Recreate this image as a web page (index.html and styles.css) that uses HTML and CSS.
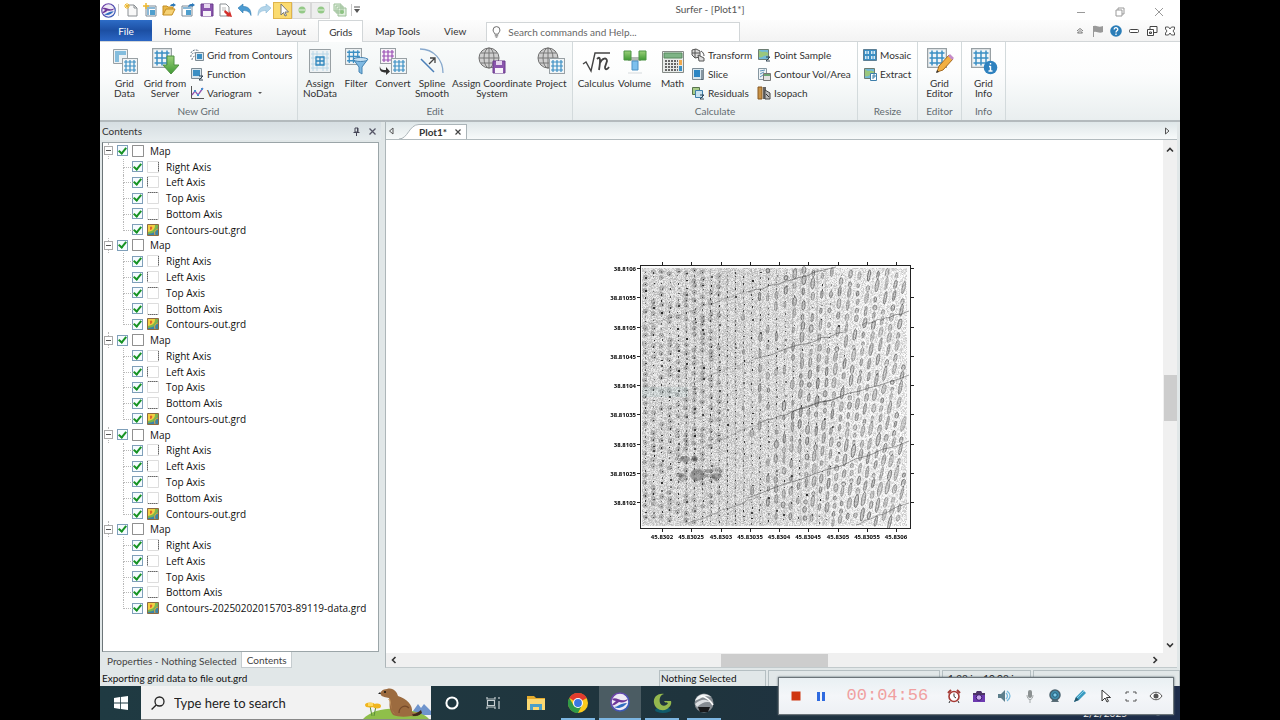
FILE: index.html
```html
<!DOCTYPE html>
<html lang="en">
<head>
<meta charset="utf-8">
<title>Surfer - [Plot1*]</title>
<link rel="stylesheet" href="styles.css">
</head>
<body>
<svg class="defs" aria-hidden="true">
  <defs>
    <linearGradient id="green" x1="0" y1="0" x2="0" y2="1"><stop offset="0" stop-color="#9bd07a"/><stop offset="1" stop-color="#3f9a34"/></linearGradient>
    <linearGradient id="brand" x1="0" y1="0" x2="1" y2="1"><stop offset="0" stop-color="#7b3fa8"/><stop offset="1" stop-color="#2c5fb8"/></linearGradient>
    <symbol id="grid" viewBox="0 0 16 16"><rect x=".5" y=".5" width="15" height="15" fill="#f1f5f7" stroke="#98a0a4"/><path d="M4 2v12M8 2v12M12 2v12M2 4h12M2 8h12M2 12h12" stroke="#3b8fc4" stroke-width="1.2"/></symbol>
    <symbol id="grid-purple" viewBox="0 0 16 16"><rect x=".5" y=".5" width="15" height="15" fill="#f7f2f8" stroke="#98a0a4"/><path d="M4 2v12M8 2v12M12 2v12M2 4h12M2 8h12M2 12h12" stroke="#9a4fb5" stroke-width="1.2"/></symbol>
    <symbol id="globe" viewBox="0 0 22 22"><circle cx="11" cy="11" r="10" fill="#cfcfcf" stroke="#6f6f6f"/><ellipse cx="11" cy="11" rx="5" ry="10" fill="none" stroke="#777"/><path d="M11 1v20M1 11h20M3 6h16M3 16h16" stroke="#777"/></symbol>
    <symbol id="brand-mark" viewBox="0 0 20 20"><circle cx="10" cy="10" r="9" fill="#eee9f5" stroke="url(#brand)" stroke-width="1.6"/><path d="M2 7c5-3 8 4 16 0-1 3-6 4-9 3-3 2-5 4-7 3 1-2 3-3 4-4-2 0-3-1-4-2z" fill="#6e3699"/><path d="M4 15c4 0 6-4 13-4-2 3-8 7-13 4z" fill="#2f6cc0"/></symbol>
    <symbol id="disk" viewBox="0 0 14 14"><path d="M1 1h12v12H1z" fill="#8a55ad" stroke="#6b3d8c"/><path d="M4 1h6v4H4z" fill="#e6d6ef"/><path d="M3 8h8v5H3z" fill="#f8f4fa"/></symbol>
  </defs>
</svg>
<div class="app">
  <header class="titlebar">
    <div class="quick">
      <svg class="qi"><use href="#brand-mark"/></svg>
      <i class="qsep"></i>
      <button class="q" aria-label="New plot"><svg viewBox="0 0 14 14"><path d="M4 2h6l3 3v8H4z" fill="#f8f8f8" stroke="#8a8f93"/><path d="M10 2v3h3" fill="none" stroke="#8a8f93"/><path d="M3 0v6M0 3h6M1 1l4 4M5 1L1 5" stroke="#f0b92d"/></svg></button>
      <button class="q" aria-label="New worksheet"><svg viewBox="0 0 14 14"><path d="M3 3h10v10H3z" fill="#fff" stroke="#7c8b98"/><path d="M4 4h8v2H4zM4 6h2v6H4z" fill="#8bb9d8"/><path d="M7 7h5v5H7z" fill="#4f9fce"/><path d="M3 0v6M0 3h6" stroke="#f0b92d" stroke-width="1.5"/></svg></button>
      <button class="q" aria-label="Open"><svg viewBox="0 0 14 14"><path d="M1 12V3h4l1 1h5v2" fill="#e9b94a" stroke="#c58e22"/><path d="M1 12l3-6h9l-3 6z" fill="#f6d276" stroke="#c58e22"/><path d="M8 3c1-2 2-2 3-2V0l3 2-3 2V3z" fill="#2d79b9"/></svg></button>
      <button class="q" aria-label="Import"><svg viewBox="0 0 14 14"><path d="M1 3h10v10H1z" fill="#fff" stroke="#7c8b98"/><path d="M2 4h8v2H2z" fill="#8bb9d8"/><path d="M5 7h5v5H5z" fill="#4f9fce"/><path d="M7 4c1-3 2-3 4-3V0l3 2-3 2V3z" fill="#2d79b9"/></svg></button>
      <button class="q" aria-label="Save"><svg><use href="#disk"/></svg></button>
      <button class="q" aria-label="Export"><svg viewBox="0 0 14 14"><path d="M1 1h6l3 3v9H1z" fill="#fff" stroke="#8a8f93"/><path d="M3 5h4M3 7h4" stroke="#bbb"/><path d="M6 7l4 3 1-2 2 6-6-1 1-1-3-3z" fill="#d3302c"/></svg></button>
      <button class="q" aria-label="Undo"><svg viewBox="0 0 14 14"><path d="M0 5l5-4v2.500c5 0 8 2 8 9-1-3-3-5-8-5V10z" fill="#4b9bd2" stroke="#2e78ae" stroke-width=".6"/></svg></button>
      <button class="q" aria-label="Redo"><svg viewBox="0 0 14 14"><path d="M14 5L9 1v2.500c-5 0-8 2-8 9 1-3 3-5 8-5V10z" fill="#b3d5ea" stroke="#8ab8d6" stroke-width=".6"/></svg></button>
      <button class="q q-on" aria-label="Select"><svg viewBox="0 0 14 14"><path d="M5 1v11l2.500-2.500L9 13l1.500-.6L9 9h3.500z" fill="#fff" stroke="#777"/></svg></button>
      <button class="q q-box" aria-label="Previous"><svg viewBox="0 0 14 14"><circle cx="7" cy="7" r="3.500" fill="#94c987"/><path d="M4 7h6" stroke="#e8f6e4"/></svg></button>
      <button class="q q-box" aria-label="Next"><svg viewBox="0 0 14 14"><circle cx="7" cy="7" r="3.500" fill="#94c987"/><path d="M4 7h6" stroke="#e8f6e4"/></svg></button>
      <button class="q" aria-label="Duplicate"><svg viewBox="0 0 14 14"><path d="M1 1h7v7H1zM3 3h7v7H3zM5 5h8v8H5z" fill="#e2f0df" stroke="#9bbf97"/><circle cx="9" cy="9" r="2" fill="#8cc381"/></svg></button>
      <i class="qsep"></i>
      <button class="more" aria-label="Customize"><svg viewBox="0 0 6 8"><path d="M0 1h6" stroke="#555"/><path d="M0 3h6L3 7z" fill="#555"/></svg></button>
    </div>
    <h1 class="title">Surfer - [Plot1*]</h1>
    <div class="win">
      <button aria-label="Minimize"><svg viewBox="0 0 10 10"><path d="M1 5.500h8" stroke="#999"/></svg></button>
      <button aria-label="Restore"><svg viewBox="0 0 10 10"><path d="M1 3h6v6H1zM3 3V1h6v6H7" fill="none" stroke="#999"/></svg></button>
      <button aria-label="Close"><svg viewBox="0 0 10 10"><path d="M1 1l8 8M9 1L1 9" stroke="#999"/></svg></button>
    </div>
  </header>

  <nav class="tabs">
    <button class="tab file">File</button>
    <button class="tab">Home</button>
    <button class="tab">Features</button>
    <button class="tab">Layout</button>
    <button class="tab current">Grids</button>
    <button class="tab">Map Tools</button>
    <button class="tab">View</button>
    <label class="find">
      <svg viewBox="0 0 10 14"><path d="M3 9.500C3 8 1 7 1 4.700a4 4 0 0 1 8 0C9 7 7 8 7 9.500zM3 11.500h4M4 13h2" fill="none" stroke="#555"/></svg>
      <input type="text" placeholder="Search commands and Help..." aria-label="Search commands and Help">
    </label>
    <div class="tools">
      <button aria-label="Collapse ribbon"><svg viewBox="0 0 12 12"><path d="M3 6l3-2.500L9 6M3.500 8h5L6 5.500z" fill="none" stroke="#555" stroke-width=".8"/></svg></button>
      <button aria-label="Flag"><svg viewBox="0 0 12 12"><path d="M1.500 1v11" stroke="#999"/><path d="M2 1c3-1 4 2 9 0v6C7 9 5 6 2 7z" fill="#999"/></svg></button>
      <button aria-label="Help"><svg viewBox="0 0 12 12"><circle cx="6" cy="6" r="5.800" fill="#2a7db8"/><path d="M4.200 4.600C4.200 2 7.900 2.200 7.800 4.400 7.700 5.800 6 5.700 6 7.400M6 8.600V10" fill="none" stroke="#fff" stroke-width="1.300"/></svg></button>
      <button aria-label="Minimize plot"><svg viewBox="0 0 12 12"><rect x="1.500" y="4.500" width="9" height="3" rx="1" fill="#fff" stroke="#444"/></svg></button>
      <button aria-label="Restore plot"><svg viewBox="0 0 12 12"><path d="M4 1.500h7v6H4z" fill="#fff" stroke="#444"/><path d="M1.500 4.500h6v6h-6z" fill="#fff" stroke="#444"/><path d="M3.500 7h2v1.500h-2z" fill="none" stroke="#444"/></svg></button>
      <button aria-label="Close plot"><svg viewBox="0 0 12 12"><path d="M1.500 2h3L6 4l1.500-2h3v2L9 6l1.500 2v2h-3L6 8l-1.500 2h-3V8L3 6 1.500 4z" fill="#fff" stroke="#444" stroke-width=".9"/></svg></button>
    </div>
  </nav>

  <section class="ribbon">
    <div class="group">
      <div class="cmds new-grid">
        <button class="big"><svg viewBox="0 0 28 28"><path d="M2.500 2.500h14v14h-14z" fill="#eef2f4" stroke="#98a0a4"/><path d="M4 4h11v4H8v7H4z" fill="#84bddd"/><use href="#grid" x="11" y="11" width="16" height="16"/></svg>Grid<br>Data</button>
        <button class="big"><svg viewBox="0 0 28 28"><use href="#grid" x="1" y="1" width="20" height="20"/><path d="M16 9h7v9h5l-8 9-8-9h4z" fill="url(#green)" stroke="#4f9044"/></svg>Grid from<br>Server</button>
        <div class="smalls">
          <button class="small"><svg viewBox="0 0 14 14"><path d="M1 5c1-3 5-4 8-2M1 9c-1-2 2-5 6-4M2 12c0-2 1-4 4-4" fill="none" stroke="#678" stroke-dasharray="2 1"/><path d="M5.500 4.500h8v8h-8z" fill="#d8e6ee" stroke="#7d8b94"/><path d="M7 6h5v5H7z" fill="#3b8fc4"/></svg>Grid from Contours</button>
          <button class="small"><svg viewBox="0 0 14 14"><path d="M1.500 1.500h10v10h-10z" fill="#d8e6ee" stroke="#7d8b94"/><path d="M3 3h7v6H3z" fill="#3b8fc4"/><path d="M9 9h4l-4 4h4" fill="none" stroke="#345"/></svg>Function</button>
          <button class="small"><svg viewBox="0 0 14 14"><path d="M1.500 0v12.500H14" fill="none" stroke="#555"/><path d="M2 9l3-4 3 4 5-7" fill="none" stroke="#8f52ad" stroke-width="1.300"/><path d="M4 4h2v2H4zM7 8h2v2H7zM11 2h2v2h-2z" fill="#458fd0"/></svg>Variogram<span class="drop"></span></button>
        </div>
      </div>
      <h2>New Grid</h2>
    </div>
    <div class="group tinted">
      <div class="cmds edit">
        <button class="big"><svg viewBox="0 0 28 28"><path d="M3.500 2.500h21v23h-21z" fill="#eef2f4" stroke="#98a0a4"/><path d="M7 4v20M11 4v20M17 4v20M21 4v20M5 7h18M5 11h18M5 17h18M5 21h18" stroke="#b8d6e6"/><path d="M10 10h8v8h-8zM14 10v8M10 14h8" fill="none" stroke="#2f86bd" stroke-width="1.300"/></svg>Assign<br>NoData</button>
        <button class="big"><svg viewBox="0 0 28 28"><use href="#grid" x="3" y="1" width="17" height="17"/><path d="M11 12h15l-6 8v7l-3-2v-5z" fill="#7fb9e2" stroke="#4583b2"/><ellipse cx="18.500" cy="12.500" rx="7" ry="2" fill="#c5e0f2" stroke="#4583b2"/></svg>Filter</button>
        <button class="big"><svg viewBox="0 0 28 28"><use href="#grid-purple" x="1" y="1" width="16" height="16"/><use href="#grid" x="12" y="11" width="16" height="16"/><path d="M1 19c0 4 3 4 6 4v-3l4 4.500L7 28v-2.500c-5 0-7-2-6-6.500z" fill="#333"/></svg>Convert</button>
        <button class="big"><svg viewBox="0 0 28 28"><path d="M2 2c14 0 23 11 23 24" fill="none" stroke="#88a9cd" stroke-width="1.300"/><path d="M3 12l13 13" stroke="#4a7fb8" stroke-width="1.500"/><path d="M11 17l6-6M12 11h5v5" fill="none" stroke="#444" stroke-width="1.300"/></svg>Spline<br>Smooth</button>
        <button class="big"><svg viewBox="0 0 28 28"><use href="#globe" x="0" y="0" width="22" height="22"/><use href="#disk" x="14" y="13" width="14" height="14"/></svg>Assign Coordinate<br>System</button>
        <button class="big"><svg viewBox="0 0 28 28"><use href="#globe" x="0" y="0" width="22" height="22"/><use href="#grid" x="12" y="11" width="16" height="16"/></svg>Project</button>
      </div>
      <h2>Edit</h2>
    </div>
    <div class="group">
      <div class="cmds calc">
        <button class="big"><svg viewBox="0 0 28 28"><path d="M1 17l3-2 5 9 4-18h15" fill="none" stroke="#444" stroke-width="1.400"/><path d="M15 12c3-3 4-1 2 11M18 16c2-5 7-6 7-2l-2 6c0 3 2 3 4 0" fill="none" stroke="#444" stroke-width="1.800"/></svg>Calculus</button>
        <button class="big"><svg viewBox="0 0 28 28"><path d="M7 10h13v4H7z" fill="#b4b9b5"/><path d="M3 4h7v9H3zM18 4h7v9h-7z" fill="url(#green)" stroke="#4c9544"/><path d="M11 14h6v9h-6z" fill="#7cc0ee" stroke="#4c93c5"/><path d="M7 26h14" stroke="#d5dadd"/></svg>Volume</button>
        <button class="big"><svg viewBox="0 0 28 28"><path d="M3.500 4.500h21v21h-21z" fill="#e8ebe9" stroke="#858b87"/><path d="M5 6h18v5H5z" fill="#7eb486" stroke="#568a5f"/><path d="M6 14h13M6 17h13M6 20h13M6 23h13" stroke="#666" stroke-width="2" stroke-dasharray="2 1"/><path d="M20 13h3v5h-3z" fill="#f0a94d"/><path d="M20 19h3v5h-3z" fill="#3b8fc4"/></svg>Math</button>
        <div class="smalls">
          <button class="small"><svg viewBox="0 0 14 14"><path d="M1 2l4-1 4 2v6l-5 1-3-3zM1 5h8M4 1v9" fill="#ddd" stroke="#555"/><path d="M7 7l6 3v3H8zM10 3c2 1 3 3 3 5" fill="#ddd" stroke="#555"/></svg>Transform</button>
          <button class="small"><svg viewBox="0 0 14 14"><path d="M1.500 1.500h11v11h-11z" fill="#d8e6ee" stroke="#7d8b94"/><path d="M3 3h6v7H3z" fill="#2c86c4"/><path d="M11 3v10" stroke="#345"/></svg>Slice</button>
          <button class="small"><svg viewBox="0 0 14 14"><path d="M1.500 1.500h7v7h-7z" fill="#a8cc88" stroke="#58744d"/><path d="M4.500 4.500h7v7h-7z" fill="#c8e2ef" stroke="#3d7eaa"/><path d="M9 9h4l-4 4h4" fill="none" stroke="#345"/></svg>Residuals</button>
        </div>
        <div class="smalls">
          <button class="small"><svg viewBox="0 0 14 14"><path d="M1.500 1.500h10v10h-10z" fill="#72b9d7" stroke="#6d7d72"/><path d="M2 2c3 4 5 0 9 3v3c-4-2-6 3-9 1z" fill="#9ac77d"/><path d="M9 9h4l-4 4h4" fill="none" stroke="#345"/></svg>Point Sample</button>
          <button class="small"><svg viewBox="0 0 14 14"><path d="M1.500 1.500h8v11h-8z" fill="#eef3f5" stroke="#8697a1"/><path d="M3 4l5-1M3 7l4-2M3 10l3-2" stroke="#5a93ba"/><path d="M6.500 6.500h7v7h-7z" fill="#e2e2e2" stroke="#777"/><path d="M7 7h6v2H7z" fill="#6aa474"/></svg>Contour Vol/Area</button>
          <button class="small"><svg viewBox="0 0 14 14"><path d="M1 1h4v12H1z" fill="#c79145" stroke="#8a5b22"/><path d="M6 1h3v12H6z" fill="#666"/><path d="M8 4l5 3v6H8z" fill="#bbb" stroke="#444"/><path d="M9 8l3 3" stroke="#333"/></svg>Isopach</button>
        </div>
      </div>
      <h2>Calculate</h2>
    </div>
    <div class="group">
      <div class="cmds resize">
        <div class="smalls">
          <button class="small"><svg viewBox="0 0 14 14"><path d="M.5 1.500h13v11H.5z" fill="#3b8fc4" stroke="#5d7f95"/><path d="M2 3h4v3H2zM8 3h4v3H8zM2 8h4v3H2zM8 8h4v3H8z" fill="#d7eaf5"/><path d="M4 3v8M10 3v8" stroke="#3b8fc4"/></svg>Mosaic</button>
          <button class="small"><svg viewBox="0 0 14 14"><path d="M1.500 1.500h10v10h-10z" fill="#72b9d7" stroke="#6d7d72"/><path d="M2 2c3 4 5 0 9 3v3c-4-2-6 3-9 1z" fill="#9ac77d"/><path d="M7.500 6.500h6v7h-6z" fill="#fff" stroke="#3d7eaa"/><path d="M10 12V8h2v2h-2" fill="none" stroke="#3d7eaa"/></svg>Extract</button>
        </div>
      </div>
      <h2>Resize</h2>
    </div>
    <div class="group">
      <div class="cmds single">
        <button class="big"><svg viewBox="0 0 28 28"><use href="#grid" x="1" y="1" width="20" height="20"/><path d="M11 25l2-6L23 8l4 4-10 11z" fill="#f2b043" stroke="#a66b21"/><path d="M22 9l2-2 4 4-2 2z" fill="#c58bc9"/><path d="M10 26l1-3 2 2z" fill="#333"/></svg>Grid<br>Editor</button>
      </div>
      <h2>Editor</h2>
    </div>
    <div class="group">
      <div class="cmds single">
        <button class="big"><svg viewBox="0 0 28 28"><use href="#grid" x="1" y="1" width="20" height="20"/><circle cx="20.500" cy="20.500" r="6.800" fill="#2f82bf"/><path d="M20.500 19v5M19 19.500h1.500M18.500 24h4M20.500 16v1.600" stroke="#fff" stroke-width="1.400"/></svg>Grid<br>Info</button>
      </div>
      <h2>Info</h2>
    </div>
  </section>

  <main class="work">
    <aside class="side">
      <div class="side-head"><h2>Contents</h2>
        <button aria-label="Auto hide"><svg viewBox="0 0 9 9"><path d="M3 1h3v4H3zM1.500 5.500h6M4.500 5.500V9M5.500 1v4" fill="none" stroke="#445"/></svg></button>
        <button aria-label="Close panel"><svg viewBox="0 0 9 9"><path d="M1.500 1.500l6 6M7.500 1.500l-6 6" stroke="#556" stroke-width="1.300"/></svg></button>
      </div>
      <div class="tree-box"><ul class="tree" id="tree"></ul></div>
      <div class="side-tabs"><button>Properties - Nothing Selected</button><button class="on">Contents</button></div>
    </aside>
    <section class="doc">
      <div class="doc-tabs">
        <button class="arrow" aria-label="Scroll tabs left"><svg viewBox="0 0 8 8"><path d="M6 1v6L2.500 4z" fill="none" stroke="#555"/></svg></button>
        <svg class="slope" viewBox="0 0 20 15"><path d="M0 15C9 15 10 .5 20 .5V15z" fill="#fff"/><path d="M0 15C9 15 10 .5 20 .5" fill="none" stroke="#aab4b8"/></svg>
        <button class="doc-tab">Plot1*<svg viewBox="0 0 8 8"><path d="M1.500 1.500l5 5M6.500 1.500l-5 5" stroke="#444" stroke-width="1.200"/></svg></button>
        <button class="arrow end" aria-label="Scroll tabs right"><svg viewBox="0 0 8 8"><path d="M2.500 1v6L6 4z" fill="none" stroke="#555"/></svg></button>
      </div>
      <div class="view">
        <figure class="plot">
          <canvas id="contours" width="270" height="263"></canvas>
          <svg id="axes" width="340" height="301" viewBox="0 0 340 301"></svg>
        </figure>
        <div class="vscroll">
          <button aria-label="Scroll up"><svg viewBox="0 0 8 8"><path d="M1 5.500l3-3 3 3" fill="none" stroke="#333" stroke-width="1.600"/></svg></button>
          <span class="vthumb"></span>
          <button aria-label="Scroll down"><svg viewBox="0 0 8 8"><path d="M1 2.500l3 3 3-3" fill="none" stroke="#333" stroke-width="1.600"/></svg></button>
        </div>
        <div class="hscroll">
          <button aria-label="Scroll left"><svg viewBox="0 0 8 8"><path d="M5.500 1l-3 3 3 3" fill="none" stroke="#333" stroke-width="1.600"/></svg></button>
          <span class="hthumb"></span>
          <button aria-label="Scroll right"><svg viewBox="0 0 8 8"><path d="M2.500 1l3 3-3 3" fill="none" stroke="#333" stroke-width="1.600"/></svg></button>
        </div>
        <span class="corner"></span>
      </div>
    </section>
  </main>

  <footer class="status">
    <span class="msg">Exporting grid data to file out.grd</span>
    <span class="cell c1">Nothing Selected</span>
    <span class="cell c2"></span>
    <span class="cell c3">1.28 in, 10.08 in</span>
    <span class="cell c4"></span>
  </footer>

  <div class="taskbar">
    <button class="task" aria-label="Start"><svg viewBox="0 0 14 14"><path d="M0 2l6-1v5.600H0zM6.800 1L14 0v6.600H6.800zM0 7.400h6V13l-6-1zM6.800 7.400H14V14l-7.200-1z" fill="#fff"/></svg></button>
    <label class="search">
      <svg class="lens" viewBox="0 0 14 14"><circle cx="8.500" cy="5.500" r="4.500" fill="none" stroke="#222" stroke-width="1.300"/><path d="M5.200 9L.6 13.500" stroke="#222" stroke-width="1.300"/></svg>
      <input type="text" placeholder="Type here to search" aria-label="Type here to search">
      <svg class="marmot" viewBox="0 0 68 32"><path d="M50 24l5-7 3 4 3-4 7 7v4H50z" fill="#6f94cc"/><path d="M0 32c8-9 25-12 40-10 12 2 22 5 26 10z" fill="#8fbf4a"/><path d="M30 28c-6-8-2-13-4-17-3-1-7-1-8-3-2-3 2-6 6-6 6-2 10 3 11 7 9 3 15 9 14 16 4 2 7-1 9 0-1 4-6 5-10 4-6 1-13 1-18-1z" fill="#9c6b3f"/><path d="M27 12c2 6 0 11 5 15-6-6-3-11-7-15z" fill="#c99a65"/><path d="M36 26c0-6 6-9 10-5" fill="none" stroke="#75492a" stroke-width="1.200"/><path d="M49 27c3 1 6-2 9-4l1 3c-3 3-6 3-9 3z" fill="#3f2a1d"/><circle cx="22" cy="5" r="1" fill="#111"/><path d="M15 7l2-2 1 2z" fill="#222"/><path d="M7 19l2 10M13 19l-2 10" stroke="#5a8f38"/><g fill="#f0b51f"><ellipse cx="7" cy="18" rx="5" ry="2.500"/><ellipse cx="14" cy="19" rx="4" ry="2.500"/></g><path d="M5 16h5v3H5z" fill="#ffd85a"/></svg>
    </label>
    <button class="task" aria-label="Cortana"><svg viewBox="0 0 20 20"><circle cx="10" cy="10" r="5.600" fill="none" stroke="#fff" stroke-width="2"/></svg></button>
    <button class="task" aria-label="Task view"><svg viewBox="0 0 20 20"><path d="M3 4v2h8V4M3 16v-2h8v2M3.500 7.500h7v5h-7zM15 4v2M15 8v8" fill="none" stroke="#c5cdd0" stroke-width="1.200"/></svg></button>
    <button class="task" aria-label="File Explorer"><svg viewBox="0 0 20 20"><path d="M1 3h7l2 2h9v12H1z" fill="#e5ab2d"/><path d="M1 6h18v11H1z" fill="#fbd872"/><path d="M4 17v-6h12v6h-3v-3H7v3z" fill="#4b9fc9"/></svg></button>
    <button class="task open" aria-label="Chrome"><svg viewBox="0 0 20 20"><circle cx="10" cy="10" r="10" fill="#fbc91d"/><path d="M10 10L1.300 5A10 10 0 0 1 18.700 5z" fill="#e23b2e"/><path d="M1.300 5A10 10 0 0 0 10 20l4.300-8.500L10 10 5.700 12.500z" fill="#2f9a48"/><circle cx="10" cy="10" r="5" fill="#fff"/><circle cx="10" cy="10" r="3.900" fill="#3a77e0"/></svg></button>
    <button class="task open active" aria-label="Surfer"><svg><use href="#brand-mark"/></svg></button>
    <button class="task open" aria-label="Global Mapper"><svg viewBox="0 0 20 20"><ellipse cx="11" cy="17" rx="8" ry="3" fill="#0f5a6b"/><path d="M12 1C5 0 1 5 2 10c1 6 8 9 13 6 3-2 5-5 4-8h-7c1 2 2 1 4 2-2 4-7 3-8 0C7 6 8 2 12 1z" fill="#94b84e"/></svg></button>
    <button class="task open" aria-label="Google Earth Pro"><svg viewBox="0 0 20 20"><circle cx="10" cy="10" r="9.500" fill="#868c92"/><path d="M1 8C3 1 12-1 17 4c-6-2-9 1-16 4z" fill="#f0f2f3"/><path d="M1 11c7-6 11-5 18-1-7-2-10-1-16 4z" fill="#dde0e3"/><path d="M7 3c6 1 9 4 12 9" fill="none" stroke="#fff" stroke-width="1.600"/><path d="M4 14h12l-2 5H6z" fill="#18191b"/></svg></button>
    <time class="date">2/2/2025</time>
    <svg class="note" viewBox="0 0 14 14"><circle cx="7" cy="7" r="6" fill="none" stroke="#9fb0b6"/></svg>
  </div>

  <div class="recorder">
    <button aria-label="Stop"><svg viewBox="0 0 14 14"><path d="M2.500 2.500h9v9h-9z" fill="#cf3610"/></svg></button>
    <button aria-label="Pause"><svg viewBox="0 0 14 14"><path d="M3 3h3v9H3zM8 3h3v9H8z" fill="#2f6be0"/></svg></button>
    <span class="clock">00:04:56</span>
    <button aria-label="Schedule"><svg viewBox="0 0 14 14"><circle cx="7" cy="7.500" r="5" fill="#fff" stroke="#a63a35" stroke-width="1.600"/><path d="M7 4.500v3l2 1.500M3 12l-1 2M11 12l1 2" fill="none" stroke="#333"/><path d="M1 4l3-3M13 4l-3-3" stroke="#a63a35" stroke-width="2"/></svg></button>
    <button aria-label="Screenshot"><svg viewBox="0 0 14 14"><path d="M1 4h3l1-2h4l1 2h3v9H1z" fill="#6d3ab0"/><path d="M1 4h3l1-2h4l1 2h3v2H1z" fill="#4d3566"/><circle cx="7" cy="8.500" r="2.800" fill="#c6a8ea" stroke="#3c1a71"/></svg></button>
    <button aria-label="Sound"><svg viewBox="0 0 14 14"><path d="M1 5h3l4-4v12L4 9H1z" fill="#5d7f8c"/><path d="M9 4c2 2 2 4 0 6M10 2c4 3 4 7 0 10" fill="none" stroke="#77bbdd" stroke-width="1.300"/></svg></button>
    <button aria-label="Microphone"><svg viewBox="0 0 14 14"><rect x="5" y="1" width="4" height="8" rx="2" fill="#8c9192"/><path d="M4 6c0 6 6 6 6 0M7 10v4" fill="none" stroke="#a4a9aa"/></svg></button>
    <button aria-label="Webcam"><svg viewBox="0 0 14 14"><path d="M3 13l2-3h4l2 3z" fill="#5b6e78"/><circle cx="7" cy="6" r="5" fill="#3f8cab" stroke="#49616e" stroke-width="1.500"/><circle cx="7" cy="6" r="2.200" fill="#7cc9e8" stroke="#235a75"/></svg></button>
    <button aria-label="Draw"><svg viewBox="0 0 14 14"><path d="M1 13l2-5 7-7 3 3-7 7z" fill="#3b9bc0"/><path d="M1 13l2-5 3 3z" fill="#27566b"/><path d="M4 9l7-7" stroke="#89cde6"/></svg></button>
    <button aria-label="Cursor"><svg viewBox="0 0 14 14"><path d="M4 1v11l3-3 2 4 1.500-.8L8.500 8.500h4z" fill="#fff" stroke="#333"/></svg></button>
    <button aria-label="Full screen"><svg viewBox="0 0 14 14"><path d="M2 5V3h3M9 3h3v2M12 10v2H9M5 12H2v-2" fill="none" stroke="#555"/></svg></button>
    <button aria-label="Show"><svg viewBox="0 0 14 14"><path d="M1 7c3-5 9-5 12 0-3 5-9 5-12 0z" fill="#fff" stroke="#555"/><circle cx="7" cy="7" r="2.500" fill="#555"/></svg></button>
  </div>
</div>
<script src="app.js"></script>
</body>
</html>
```

FILE: styles.css
```css
* { box-sizing: border-box; }
body {
  margin: 0;
  background: #000;
  font-family: Lato, "Noto Sans", sans-serif;
  font-size: 10px;
  line-height: 12px;
  color: #333;
}
button, input {
  font: inherit;
  color: inherit;
  margin: 0;
  padding: 0;
  border: 0;
  background: none;
}
button { white-space: nowrap; }
h1, h2, ul, figure { margin: 0; padding: 0; font-size: inherit; font-weight: 400; }
svg { display: block; flex: none; }
.defs { position: absolute; width: 0; height: 0; }

.app {
  position: relative;
  display: flex;
  flex-direction: column;
  width: 84.375%;
  height: 100vh;
  min-height: 640px;
  margin: 0 auto;
  overflow: hidden;
  background: #e1e7e8;
}

/* Title bar */
.titlebar {
  display: flex;
  align-items: center;
  height: 20px;
  background: #fff;
}
.quick { display: flex; align-items: center; height: 16px; padding-left: 1px; }
.qi { width: 15px; height: 15px; }
.qsep { width: 1px; height: 12px; margin: 0 2px; background: #c9c9c9; }
.q {
  display: grid;
  place-items: center;
  width: 19px;
  height: 17px;
}
.q svg { width: 14px; height: 14px; }
.q-on { background: #fbdb70; border: 1px solid #dfb44c; }
.q-box { background: #eee; border: 1px solid #d8d8d8; }
.more svg { width: 6px; height: 8px; }
.title { flex: 1; padding: 0 16px 2px 0; text-align: center; color: #555; }
.win { display: flex; gap: 29px; padding: 4px 16px 0 0; }
.win svg { width: 10px; height: 10px; }

/* Ribbon tabs */
.tabs {
  display: flex;
  align-items: stretch;
  height: 22px;
  background: linear-gradient(#fdfdfd, #f3f3f3);
  border-bottom: 1px solid #d2d6d8;
}
.tab { padding: 0 12px; color: #333; }
.file {
  width: 52px;
  color: #fff;
  background: linear-gradient(#2d6cc6, #1c4fa3 50%, #2b66c4);
}
.current {
  margin-bottom: -1px;
  padding: 0 10px;
  background: #fff;
  border: 1px solid #d2d6d8;
  border-bottom: 0;
}
.find {
  display: flex;
  align-items: center;
  gap: 7px;
  width: 254px;
  margin: 2px 0 0 8px;
  padding-left: 5px;
  background: #fff;
  border: 1px solid #d2d6d8;
  border-bottom: 0;
}
.find svg { width: 9px; height: 12px; }
.find input { flex: 1; min-width: 0; outline: 0; }
.find input::placeholder { color: #666; opacity: 1; }
.tools { display: flex; align-items: center; gap: 6px; margin-left: auto; padding-right: 4px; }
.tools svg { width: 12px; height: 12px; }

/* Ribbon */
.ribbon {
  display: flex;
  height: 80px;
  background: linear-gradient(#fff, #fcfdfd 40%, #e9eeef);
  border-bottom: 2px solid #b3babd;
}
.group {
  display: flex;
  flex-direction: column;
  border-right: 1px solid #d3dadc;
}
.tinted { background: linear-gradient(#f9fbfb, #e9eeef); }
.group h2 { text-align: center; color: #636b70; }
.cmds { display: grid; height: 63px; padding-top: 3px; }
.new-grid { grid-template-columns: 37px 44px 110px; padding-left: 6px; }
.edit { grid-template-columns: 36px 36px 38px 40px 80px 38px; padding: 3px 2px 0 4px; }
.calc { grid-template-columns: 38px 39px 37px 66px 100px; padding-left: 4px; }
.resize { grid-template-columns: 54px; padding-left: 5px; }
.single { grid-template-columns: 43px; }
.big {
  display: flex;
  flex-direction: column;
  align-items: center;
  gap: 3px;
  padding-top: 2px;
  line-height: 10px;
  text-align: center;
}
.big svg { width: 28px; height: 28px; }
.smalls { display: flex; flex-direction: column; padding-left: 3px; }
.calc .smalls, .resize .smalls { padding-left: 0; }
.small { display: flex; align-items: center; gap: 3px; height: 19px; }
.small svg { width: 14px; height: 14px; }
.drop {
  margin-left: 3px;
  border: 2px solid transparent;
  border-top-color: #555;
  border-bottom: 0;
}

/* Contents panel */
.work { display: flex; flex: 1; min-height: 0; }
.side { display: flex; flex-direction: column; flex: none; width: 281px; }
.side-head {
  display: flex;
  align-items: center;
  gap: 7px;
  height: 18px;
  padding: 0 4px 0 2px;
  background: linear-gradient(#d6dee2, #e6ecee);
}
.side-head h2 { flex: 1; }
.side-head svg { width: 9px; height: 9px; }
.tree-box {
  flex: 1;
  min-height: 0;
  margin: 2px 2px 0;
  overflow: hidden;
  background: #fff;
  border: 1px solid #9ba5a8;
  border-left-color: #6d7679;
}
.tree {
  display: grid;
  grid-auto-rows: 1fr;
  height: 473px;
  font-family: "Open Sans", "Noto Sans", sans-serif;
  color: #111;
}
.row { position: relative; display: flex; align-items: center; list-style: none; padding-left: 29px; }
.row.map { padding-left: 1px; }
.row::before {
  content: "";
  position: absolute;
  left: 20px;
  top: 0;
  width: 9px;
  height: 50%;
  border: dotted #b8b8b8;
  border-width: 0 0 1px 1px;
}
.row:not(.last)::after {
  content: "";
  position: absolute;
  left: 20px;
  top: 50%;
  height: 50%;
  border-left: 1px dotted #b8b8b8;
}
.row.map::before { left: 5px; top: 0; height: 100%; width: 0; border-width: 0 0 0 1px; }
.row.map::after { display: none; }
.fold {
  position: relative;
  display: grid;
  place-items: center;
  width: 9px;
  height: 9px;
  margin-right: 4px;
  background: #fff;
  border: 1px solid #aaa;
}
.fold::before { content: ""; width: 5px; height: 1px; background: #555; }
.row label { display: flex; align-items: center; white-space: nowrap; }
.row input {
  appearance: none;
  display: grid;
  place-items: center;
  width: 11px;
  height: 11px;
  background: #f5fbff;
  border: 1px solid #7f9fb9;
}
.row input:checked::before {
  content: "";
  width: 3px;
  height: 6px;
  margin-top: -2px;
  border: solid #179324;
  border-width: 0 2px 2px 0;
  transform: rotate(40deg);
}
.kind { width: 12px; height: 12px; margin: 0 7px 0 4px; }
.map .kind { margin-right: 6px; }

.side-tabs { display: flex; height: 16px; padding-left: 2px; }
.side-tabs button { padding: 1px 4px 0 5px; color: #444; }
.side-tabs .on { padding-top: 0; background: #fff; border: 1px solid #c5cccf; border-top: 0; }

/* Document */
.doc {
  display: flex;
  flex-direction: column;
  flex: 1;
  min-width: 0;
  margin: 0 3px 0 4px;
  border-left: 1px solid #adb6b9;
  border-bottom: 1px solid #c2cacc;
}
.doc-tabs {
  display: flex;
  align-items: flex-end;
  height: 18px;
  background: linear-gradient(#dfe7e9, #f7fafa);
  border-bottom: 1px solid #b2bbbe;
}
.arrow { align-self: center; padding: 0 1px; }
.arrow svg { width: 8px; height: 8px; }
.arrow.end { margin-left: auto; padding-right: 6px; }
.slope { width: 20px; height: 15px; margin-left: 3px; }
.doc-tab {
  display: flex;
  align-items: center;
  gap: 7px;
  height: 15px;
  padding: 0 4px 0 0;
  font-weight: 700;
  background: #fff;
  border: 1px solid #aab4b8;
  border-width: 1px 1px 0 0;
}
.doc-tab svg { width: 8px; height: 8px; }
.view {
  display: grid;
  grid-template: 1fr 14px / 1fr 14px;
  flex: 1;
  min-height: 0;
  background: #fff;
}
.plot { display: grid; place-content: center; place-items: center; }
.plot > * { grid-area: 1 / 1; }
.vscroll, .hscroll { display: flex; align-items: center; justify-content: space-between; background: #f0f0f0; }
.vscroll { flex-direction: column; padding: 6px 0 4px; }
.hscroll { padding: 0 4px; }
.vscroll svg, .hscroll svg { width: 8px; height: 8px; }
.vthumb { width: 13px; height: 46px; background: #cdcdcd; }
.hthumb { width: 107px; height: 13px; background: #cdcdcd; }
.corner { background: #f0f0f0; }

/* Status bar */
.status { display: flex; align-items: flex-end; height: 18px; color: #111; }
.msg { flex: 1; padding: 0 0 2px 2px; }
.cell {
  height: 16px;
  margin-left: 2px;
  padding-top: 1px;
  overflow: hidden;
  border: 1px solid #b5bfc2;
  border-width: 1px 1px 0;
}
.c1 { width: 107px; padding-left: 1px; }
.c2 { width: 172px; }
.c3 { width: 89px; padding-left: 5px; }
.c4 { width: 147px; }

/* Task bar */
.taskbar {
  display: flex;
  align-items: stretch;
  height: 34px;
  background: linear-gradient(90deg, #1f3a42, #1f343d 55%, #1d2c4a);
}
.task { display: grid; place-items: center; width: 42px; }
.task svg { width: 20px; height: 20px; }
.task:first-child { width: 41px; }
.task:first-child svg { width: 14px; height: 14px; }
.open {
  background: linear-gradient(#7db6e2, #7db6e2) bottom / 34px 2px no-repeat;
}
.active { background: #4b5c63; border-bottom: 2px solid #7db6e2; }
.search {
  display: flex;
  align-items: center;
  width: 290px;
  padding-left: 10px;
  background: #f2f2f2;
  border-bottom: 1px solid #888;
}
.lens { width: 14px; height: 14px; }
.search input { flex: 1; min-width: 0; margin-left: 9px; font-size: 13px; line-height: 20px; outline: 0; }
.search input::placeholder { color: #222; opacity: 1; }
.marmot { align-self: flex-end; width: 68px; height: 32px; }
.date { align-self: flex-end; margin-left: auto; color: #fff; line-height: 14px; }
.note { align-self: flex-end; width: 14px; height: 14px; margin: 0 15px 4px 24px; }

/* Floating recorder strip */
.recorder {
  position: absolute;
  right: 6px;
  bottom: 5px;
  display: flex;
  align-items: center;
  justify-content: space-between;
  width: 396px;
  height: 38px;
  padding: 0 10px;
  background: linear-gradient(#e9f0f3, #f4f6f9 50%, #edf0f4);
  border: 1px solid #6b7479;
  box-shadow: 0 0 2px #53606a;
}
.recorder svg { width: 14px; height: 14px; }
.clock {
  width: 82px;
  margin: 0 7px;
  font-family: "Liberation Mono", monospace;
  font-size: 17px;
  line-height: 20px;
  color: #f0a0a0;
}
```

FILE: app.js
```js
const SVG = 'http://www.w3.org/2000/svg';

/* Contents tree */
const sides = {
  'Right Axis': 'M11.5 1v10',
  'Left Axis': 'M.5 1v10',
  'Top Axis': 'M1 .5h10',
  'Bottom Axis': 'M1 11.5h10'
};
const grids = ['Contours-out.grd', 'Contours-out.grd', 'Contours-out.grd', 'Contours-out.grd',
  'Contours-20250202015703-89119-data.grd'];

function kindIcon(name) {
  let body;
  if (name === 'Map') {
    body = '<path d="M.5.5h11v11H.5z" fill="#fff" stroke="#aaa"/><path d="M.5.5h11v11H.5z" fill="none" stroke="#777" stroke-dasharray="1 1"/>';
  } else if (sides[name]) {
    body = '<path d="M.5.5h11v11H.5z" fill="#fff" stroke="#ddd"/><path d="' + sides[name] + '" stroke="#aaa"/><path d="' + sides[name] + '" stroke="#666" stroke-dasharray="1 1"/>';
  } else {
    body = '<path d="M.5.5h11v11H.5z" fill="#3d83a8" stroke="#8d6a42"/><path d="M1 1h10c0 5-3 8-10 9z" fill="#7cb84c"/>' +
      '<path d="M1 1h7c0 4-2 6-7 7z" fill="#f4cf43"/><path d="M3 3c3-2 3 3 0 3z" fill="#e0662c"/><path d="M8 11c-1-3 0-5 3-6" fill="none" stroke="#e8a83c"/>';
  }
  return '<svg class="kind" viewBox="0 0 12 12">' + body + '</svg>';
}

document.getElementById('tree').innerHTML = grids.map(grid =>
  ['Map', ...Object.keys(sides), grid].map(name => {
    const map = name === 'Map';
    const cls = 'row' + (map ? ' map' : '') + (name === grid ? ' last' : '');
    return '<li class="' + cls + '">' + (map ? '<button class="fold" aria-label="Collapse"></button>' : '') +
      '<label><input type="checkbox" checked>' + kindIcon(name) + name + '</label></li>';
  }).join('')).join('');

/* Axes */
const axes = document.getElementById('axes');
function add(tag, attrs, text) {
  const el = document.createElementNS(SVG, tag);
  for (const key in attrs) el.setAttribute(key, attrs[key]);
  if (text) el.textContent = text;
  axes.appendChild(el);
}
add('rect', { x: 35.5, y: 19.5, width: 270, height: 263, fill: 'none', stroke: '#222' });
const yLabels = ['38.8106', '38.81055', '38.8105', '38.81045', '38.8104', '38.81035', '38.8103', '38.81025', '38.8102'];
const xLabels = ['45.8302', '45.83025', '45.8303', '45.83035', '45.8304', '45.83045', '45.8305', '45.83055', '45.8306'];
const font = { 'font-family': 'Open Sans, sans-serif', 'font-weight': 700, 'font-size': 6, fill: '#000' };
yLabels.forEach((label, i) => {
  const y = Math.round(23 + i * 29.25);
  add('path', { d: `M32 ${y - .5}h3M306 ${y - .5}h3`, stroke: '#222' });
  add('text', { x: 31, y: y + 2, 'text-anchor': 'end', ...font }, label);
});
xLabels.forEach((label, i) => {
  const x = Math.round(57 + i * 29.25);
  add('path', { d: `M${x + .5} 16v3M${x + .5} 283v3`, stroke: '#222' });
  add('text', { x: x, y: 293, 'text-anchor': 'middle', ...font }, label);
});

/* Contour field */
const canvas = document.getElementById('contours');
const ctx = canvas.getContext('2d');
const W = canvas.width, H = canvas.height;
let seed = 7;
const rnd = () => (seed = (seed * 16807) % 2147483647) / 2147483647;

const img = ctx.createImageData(W, H);
for (let y = 0; y < H; y++) {
  for (let x = 0; x < W; x++) {
    const edge = x < 2 || y < 3 || x > W - 4 || y > H - 3;
    const mid = 212 + 16 * Math.max(0, (x - 100) / 170);
    const v = edge ? 250 : mid + (rnd() - .5) * 60;
    const i = (y * W + x) * 4;
    img.data[i] = img.data[i + 1] = img.data[i + 2] = v;
    img.data[i + 3] = 255;
  }
}
ctx.putImageData(img, 0, 0);

/* Dots on the left give way to elongated rings towards the right. */
for (let cx = 5; cx < W + 20; cx += 8.2) {
  const t = cx / W;
  const lean = Math.max(0, t - .5) * .4;
  const ringShare = Math.min(1, Math.max(0, (t - .35) / .45));
  for (let y = 5 + rnd() * 6; y < H - 5; ) {
    const x = cx + (H / 2 - y) * lean * .7 + (rnd() - .5);
    if (x < 3 || x > W - 6) { y += 8; continue; }
    if (rnd() < ringShare) {
      const len = 2 + rnd() * 6 * t;
      ctx.strokeStyle = `rgba(255,255,255,${.45 * ringShare})`;
      ctx.lineWidth = 1.4;
      ctx.beginPath();
      ctx.ellipse(x, y, 3, len + 2, .04 + lean, 0, 7);
      ctx.stroke();
      ctx.strokeStyle = `rgba(50,50,50,${.3 + rnd() * .4})`;
      ctx.fillStyle = 'rgba(120,120,120,.25)';
      ctx.lineWidth = .8;
      ctx.beginPath();
      ctx.ellipse(x, y, 1 + rnd(), len, .04 + lean, 0, 7);
      ctx.fill();
      ctx.stroke();
      y += len * 1.6 + 4;
    } else {
      if (t < .3 && rnd() > .5) {
        ctx.fillStyle = 'rgba(110,110,110,.25)';
        ctx.strokeStyle = 'rgba(90,90,90,.4)';
        ctx.lineWidth = .8;
        ctx.beginPath();
        ctx.arc(x, y, 2, 0, 7);
        ctx.fill();
        ctx.stroke();
      }
      ctx.fillStyle = `rgba(25,25,25,${.35 + rnd() * .6})`;
      ctx.fillRect(Math.round(x), Math.round(y), rnd() > .85 ? 2 : 1, rnd() > .5 ? 2 : 1);
      y += 4 + Math.round(rnd() * 4);
    }
  }
}

ctx.lineWidth = 1;
for (let cx = 46; cx < 190; cx += 8.2) {
  ctx.strokeStyle = `rgba(80,80,80,${.1 + rnd() * .15})`;
  ctx.beginPath();
  ctx.moveTo(cx, 4);
  ctx.lineTo(cx, H - 4);
  ctx.stroke();
}

ctx.lineWidth = .8;
[[0, 62, 110, 26, .3], [108, 27, 196, 2, .6], [50, 119, 114, 94, .3], [114, 94, 204, 67, .6], [222, 60, 269, 46, .6],
  [150, 147, 269, 110, .6], [60, 184, 120, 158, .3], [120, 158, 200, 132, .6], [45, 260, 120, 231, .4],
  [108, 233, 269, 176, .6], [216, 260, 269, 238, .6]].forEach(([x1, y1, x2, y2, alpha]) => {
  ctx.strokeStyle = `rgba(60,60,60,${alpha})`;
  ctx.beginPath();
  ctx.moveTo(x1, y1);
  for (let k = 1; k <= 12; k++) {
    ctx.lineTo(x1 + (x2 - x1) * k / 12, y1 + (y2 - y1) * k / 12 + (k < 12 ? (rnd() - .5) * 2.4 : 0));
  }
  ctx.stroke();
});

/* Dense cluster: filled cores with a scatter of small rings */
ctx.fillStyle = 'rgba(120,120,120,.6)';
[[45, 194, 5, 3], [55, 194, 3, 2], [57, 210, 7, 6], [40, 210, 4, 2], [76, 211, 6, 3], [69, 206, 4, 2]].forEach(([x, y, rx, ry]) => {
  ctx.beginPath();
  ctx.ellipse(x, y, rx, ry, 0, 0, 7);
  ctx.fill();
});
ctx.strokeStyle = 'rgba(70,70,70,.4)';
for (let k = 0; k < 44; k++) {
  const low = k > 12;
  ctx.beginPath();
  ctx.arc(low ? 38 + rnd() * 45 : 36 + rnd() * 22, low ? 204 + rnd() * 12 : 192 + rnd() * 5, 1.2, 0, 7);
  ctx.stroke();
}
ctx.fillStyle = 'rgba(150,200,195,.12)';
ctx.fillRect(2, 122, 46, 10);
```
